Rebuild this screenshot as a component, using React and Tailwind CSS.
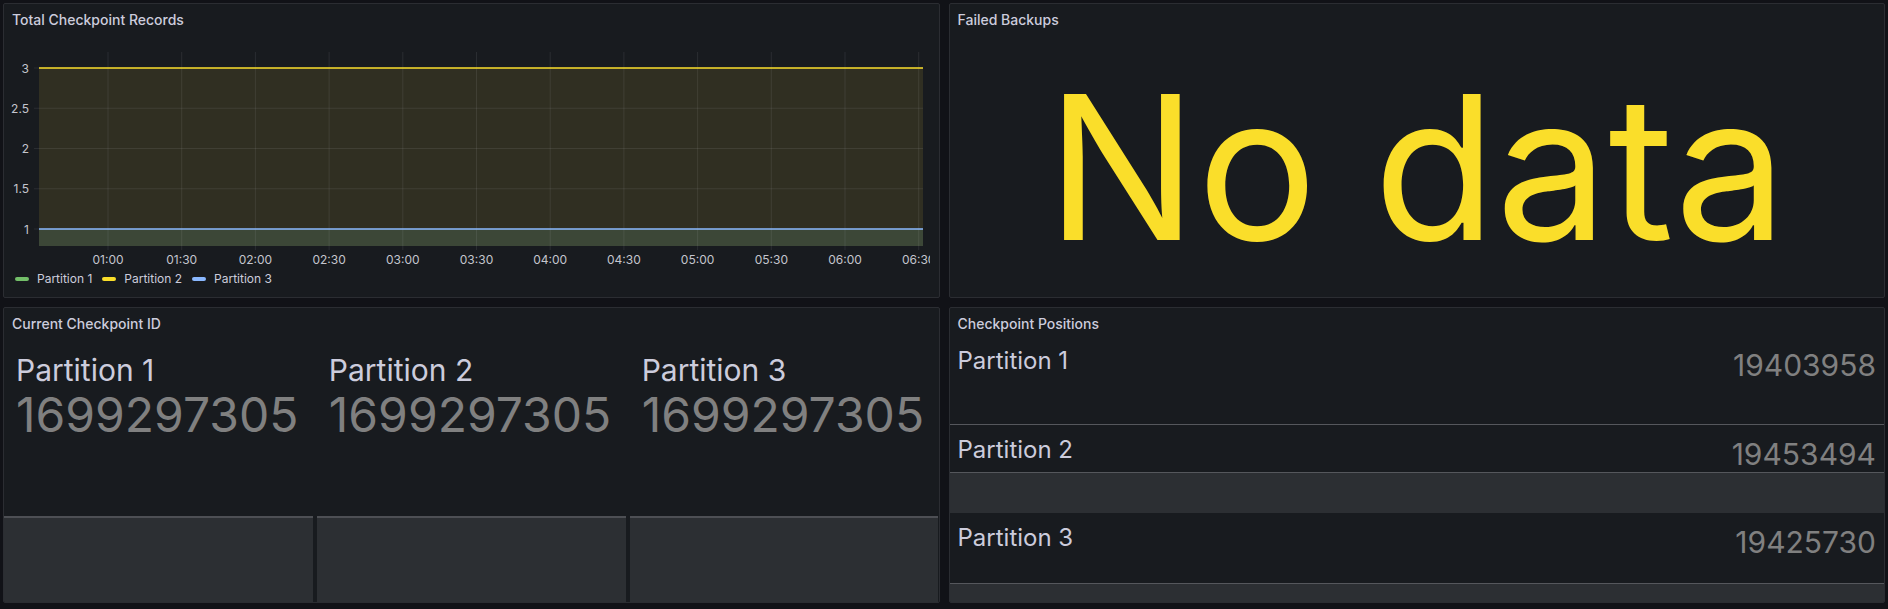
import React from "react";

const XL = ["01:00","01:30","02:00","02:30","03:00","03:30","04:00","04:30","05:00","05:30","06:00","06:30"];
const YL = [["3",32],["2.5",72.25],["2",112.5],["1.5",152.75],["1",193]];

function Title({ children }) {
  return (
    <div className="h-8 shrink-0 px-2 flex items-center text-sm font-medium text-[#ccccdc]">
      {children}
    </div>
  );
}

function Chart() {
  const L = 35, R = 919, T = 16, B = 210;
  return (
    <svg width="926" height="232" className="block overflow-hidden shrink-0">
      <rect x={L} y={32} width={R - L} height={B - 32} fill="#302f22" />
      <rect x={L} y={193} width={R - L} height={B - 193} fill="#3c4737" />
      {YL.map(([t, y]) => (
        <line key={t} x1={L - 5} x2={R} y1={y} y2={y} stroke="rgba(204,204,220,0.1)" strokeWidth="1" />
      ))}
      {XL.map((t, k) => {
        const x = 104 + k * 73.7;
        return <line key={t} x1={x} x2={x} y1={T} y2={B + 4} stroke="rgba(204,204,220,0.1)" strokeWidth="1" />;
      })}
      <line x1={L} x2={R} y1={32} y2={32} stroke="#fade2a" strokeWidth="1.5" />
      <line x1={L} x2={R} y1={193} y2={193} stroke="#8ab8ff" strokeWidth="1.5" />
      {YL.map(([t, y]) => (
        <text key={t} x={25} y={y} textAnchor="end" dominantBaseline="central" fontSize="12" fill="#c4c5cd" fontFamily="Inter, sans-serif">{t}</text>
      ))}
      {XL.map((t, k) => (
        <text key={t} x={104 + k * 73.7} y={223} textAnchor="middle" dominantBaseline="central" fontSize="12" fill="#c4c5cd" fontFamily="Inter, sans-serif">{t}</text>
      ))}
    </svg>
  );
}

function LegendItem({ color, label }) {
  return (
    <div className="flex items-center gap-2 mr-[10px]">
      <span className="w-[14px] h-[4px] rounded-full" style={{ background: color }} />
      <span>{label}</span>
    </div>
  );
}

const panel = "bg-[#181b1f] border border-[#2b2d32] rounded-[2px] flex flex-col overflow-hidden min-w-0";

export default function App() {
  return (
    <div className="w-[1888px] h-[609px] bg-[#111217] p-[3px] grid grid-cols-2 grid-rows-[295px_296px] gap-[9px] font-[Inter,sans-serif]">
      <div className={panel}>
        <Title>Total Checkpoint Records</Title>
        <Chart />
        <div className="h-[22px] flex items-center pl-[11px] text-xs text-[#ccccdc]">
          <LegendItem color="#73bf69" label="Partition 1" />
          <LegendItem color="#fade2a" label="Partition 2" />
          <LegendItem color="#8ab8ff" label="Partition 3" />
        </div>
      </div>

      <div className={panel}>
        <Title>Failed Backups</Title>
        <div className="flex-1 flex items-center justify-center">
          <span className="text-[200px] leading-none text-[#fade2a] whitespace-nowrap">No data</span>
        </div>
      </div>

      <div className={panel}>
        <Title>Current Checkpoint ID</Title>
        <div className="flex-1 flex gap-1">
          {["Partition 1", "Partition 2", "Partition 3"].map((n) => (
            <div key={n} className="flex-1 flex flex-col min-w-0">
              <div className="pl-3 pt-[15px]">
                <div className="text-[30px] leading-none text-[#ccccdc]">{n}</div>
                <div className="text-[48px] leading-none text-[#808080] mt-[6px]">1699297305</div>
              </div>
              <div className="mt-auto h-[86px] bg-[#2c2f33] border-t-2 border-[#4d4f54]" />
            </div>
          ))}
        </div>
      </div>

      <div className={panel}>
        <Title>Checkpoint Positions</Title>
        <div className="flex-1 flex flex-col gap-1">
          {[
            ["Partition 1", "19403958", 1],
            ["Partition 2", "19453494", 41],
            ["Partition 3", "19425730", 19],
          ].map(([n, v, h]) => (
            <div key={n} className="flex-1 flex flex-col min-h-0">
              <div className="flex justify-between">
                <div className="pl-2 pt-[9px] text-[24px] leading-none text-[#ccccdc]">{n}</div>
                <div className="pr-2 pt-[10px] text-[30px] leading-none text-[#808080]">{v}</div>
              </div>
              <div className="mt-auto bg-[#2c2f33] border-t border-[#55575c]" style={{ height: h }} />
            </div>
          ))}
        </div>
      </div>
    </div>
  );
}
